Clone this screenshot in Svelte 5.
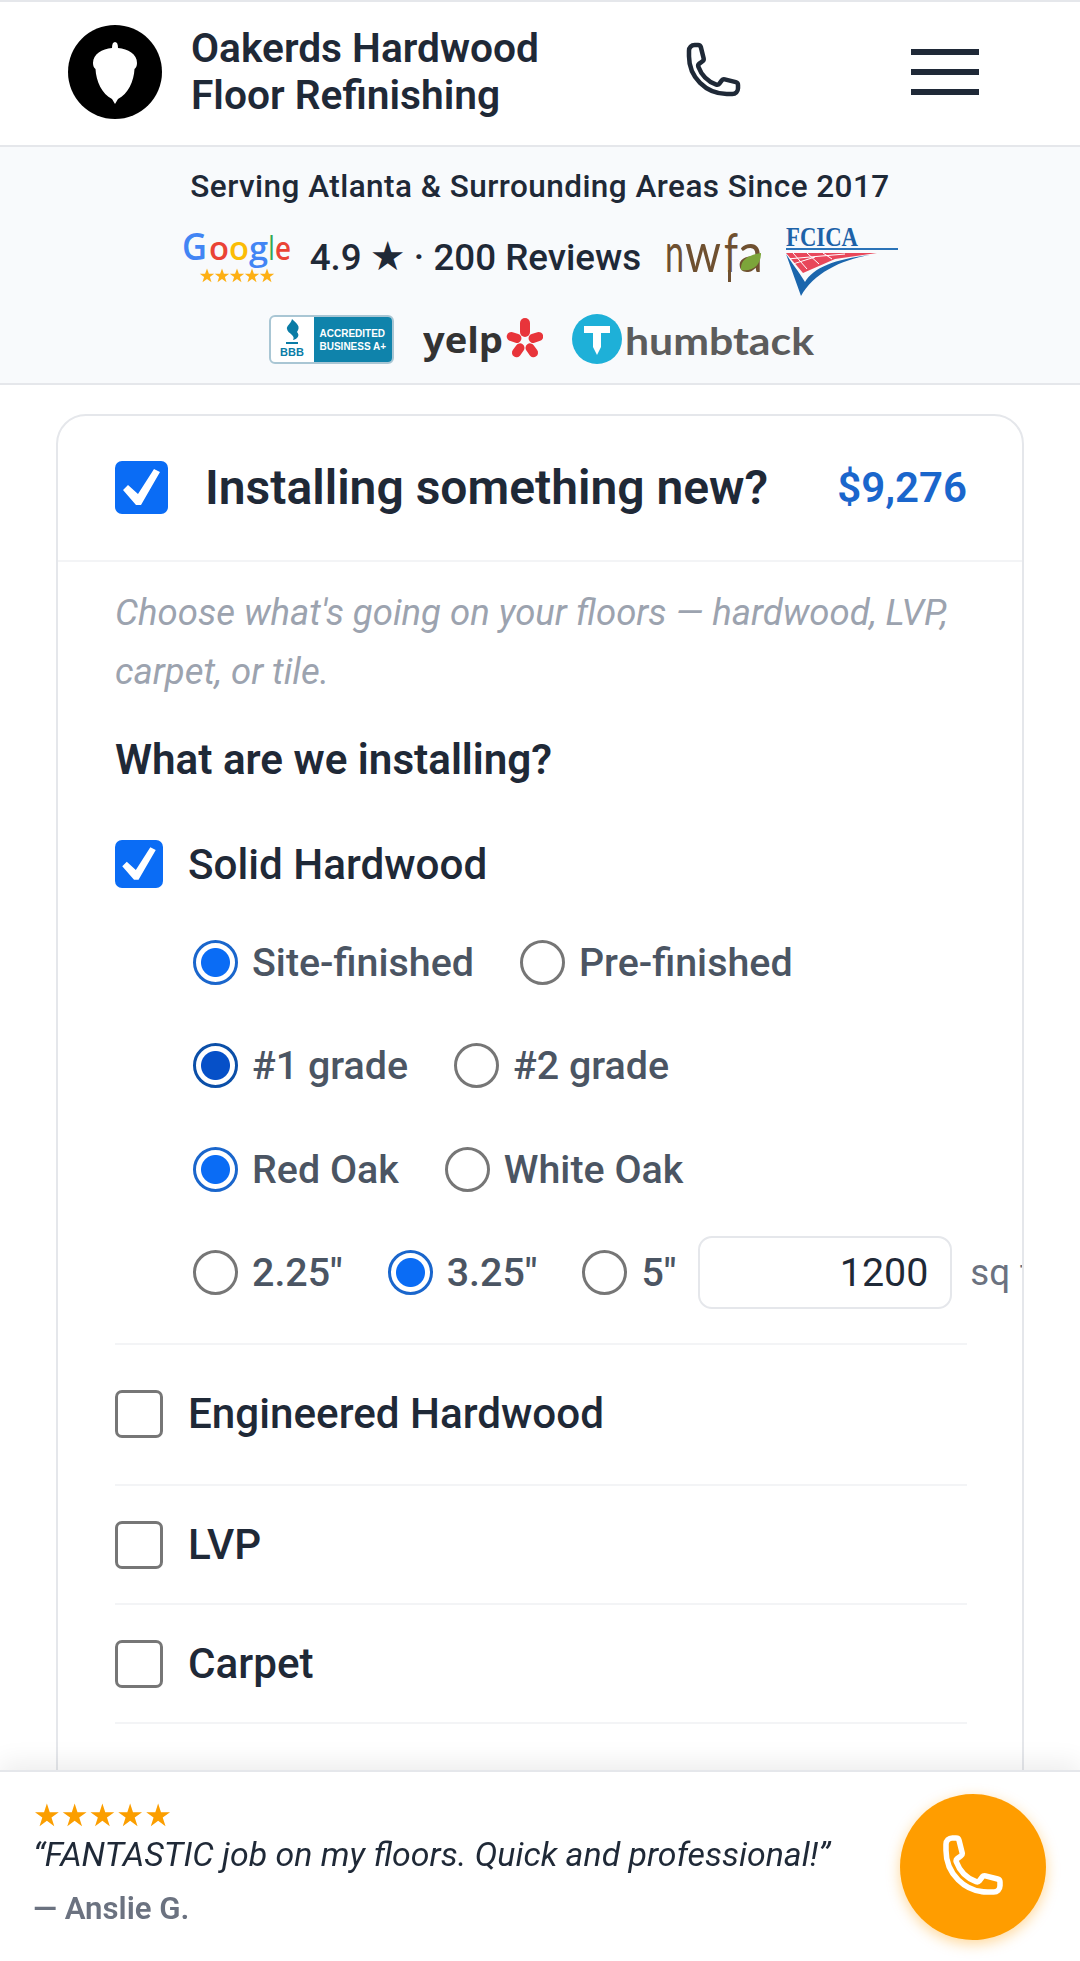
<script>
  const phone = "M2.25 6.75c0 8.284 6.716 15 15 15h2.25a2.25 2.25 0 002.25-2.25v-1.372c0-.516-.351-.966-.852-1.091l-4.423-1.106c-.44-.11-.902.055-1.173.417l-.97 1.293c-.282.376-.769.542-1.21.38a12.035 12.035 0 01-7.143-7.143c-.162-.441.004-.928.38-1.21l1.293-.97c.363-.271.527-.734.417-1.173L6.963 3.102a1.125 1.125 0 00-1.091-.852H4.5A2.25 2.25 0 002.25 4.5v2.25z";
  const check = "8,29 13,24 23,33 39,8 45,11 26,44 21,44";
  const star = "M0 -7.400 L1.900 -2.300 L7.200 -2.200 L2.900 1 L4.500 6.200 L0 3.100 L-4.500 6.200 L-2.900 1 L-7.200 -2.200 L-1.900 -2.300Z";
  const rows = [
    { cls: "", opts: [["Site-finished", true], ["Pre-finished", false]] },
    { cls: "focus", opts: [["#1 grade", true], ["#2 grade", false]] },
    { cls: "", opts: [["Red Oak", true], ["White Oak", false]] }
  ];
  const widths = [['2.25"', false], ['3.25"', true], ['5"', false]];
  const others = ["Engineered Hardwood", "LVP", "Carpet"];
  const google = [
    ["G", 0, 25, "#4285f4", 38], ["o", 27, 20, "#ea4335", 32], ["o", 47, 20, "#fbbc05", 32],
    ["g", 67, 19, "#4285f4", 32], ["l", 87, 5, "#34a853", 33], ["e", 93, 16, "#ea4335", 32]
  ];
  const nwfa = [["n", 0, 19], ["w", 20, 36], ["f", 59, 14], ["a", 73, 25]];
</script>

<div class="page">
  <header class="top">
    <div class="brand">
      <svg class="logo" viewBox="0 0 94 94" aria-hidden="true">
        <circle cx="47" cy="47" r="47" fill="#000" />
        <path fill="#fff" d="M44 23C44 19 45 17 47 17C49 17 50 19 50 23C60 24 69 29 69 38C69 41 68 43 66.500 44C66 56 60 69 50 74L47 79L44 74C34 69 28 56 27.500 44C26 43 25 41 25 38C25 29 34 24 44 23Z" />
      </svg>
      <div class="name">Oakerds Hardwood<br />Floor Refinishing</div>
    </div>
    <svg class="tel" viewBox="2.25 2.25 19.5 19.5" aria-label="Call"><path d={phone} /></svg>
    <div class="burger" aria-label="Menu"><span></span><span></span><span></span></div>
  </header>

  <section class="trust">
    <p class="since">Serving Atlanta &amp; Surrounding Areas Since 2017</p>
    <div class="logos first">
      <svg class="g" width="110" height="50" viewBox="0 0 110 50" aria-label="Google">
        {#each google as [ch, x, len, color, size]}
          <text x={x} y="27" font-family="Open Sans" font-weight="600" font-size={size} fill={color} textLength={len} lengthAdjust="spacingAndGlyphs">{ch}</text>
        {/each}
        {#each [0, 1, 2, 3, 4] as i}
          <path d={star} fill="#fdb015" transform={`translate(${25 + i * 15} 43)`} />
        {/each}
      </svg>
      <span class="rating">4.9 <span class="blackstar">★</span> · 200 Reviews</span>
      <svg class="nw" width="100" height="50" viewBox="0 0 100 50" aria-label="NWFA">
        {#each nwfa as [ch, x, len]}
          <text x={x} y="40" font-family="Lato" font-weight="400" font-size="54" fill="#6f5030" textLength={len} lengthAdjust="spacingAndGlyphs">{ch}</text>
        {/each}
        <rect x="63" y="38" width="3" height="12" fill="#6f5030" />
        <path d="M76 38 C75 28 83 23 96 21 C96 32 89 40 76 38Z" fill="#7ca53a" />
      </svg>
      <svg class="fc" width="113" height="70" viewBox="0 0 113 70" aria-label="FCICA">
        <text x="1" y="20" font-family="Liberation Serif" font-weight="700" font-size="28" fill="#1e62a8" textLength="72" lengthAdjust="spacingAndGlyphs">FCICA</text>
        <rect x="1" y="22" width="112" height="2" fill="#2b73b8" />
        <polygon points="1,27 92,27 50,33 18,47" fill="#e8475a" />
        <path d="M8 27 L22 43 M22 27 L34 38 M38 27 L47 33 M2 33 L60 28 M8 38 L30 31" stroke="#fff" stroke-width="1" fill="none" />
        <path d="M1 28 L16 70 C28 48 55 34 85 29 C50 33 28 42 20 56 C14 46 6 36 1 28Z" fill="#1b66ad" />
      </svg>
    </div>
    <div class="logos second">
      <div class="bbb">
        <div class="bbb-l">
          <svg width="26" height="30" viewBox="0 0 26 30" aria-hidden="true">
            <path d="M13 2 C18 7 22 9 18 15 C21 18 19 22 14 23 C17 18 9 17 8 12 C7 9 12 7 13 2Z" fill="#0a7ca6" />
            <rect x="7" y="25" width="12" height="2" fill="#0a7ca6" />
          </svg>
          <span>BBB</span>
        </div>
        <div class="bbb-r">ACCREDITED<br />BUSINESS A+</div>
      </div>
      <svg class="ye" width="120" height="46" viewBox="0 0 120 46" aria-label="Yelp">
        <text x="0" y="35" font-family="Open Sans" font-weight="700" font-size="36" fill="#333" textLength="80" lengthAdjust="spacingAndGlyphs">yelp</text>
        <g fill="#e8343a" transform="translate(102 23)">
          <rect x="-5" y="-23" width="10" height="19" rx="5" />
          <rect x="-4.500" y="-19" width="9" height="15" rx="4.500" transform="rotate(72)" />
          <rect x="-4.500" y="-19" width="9" height="15" rx="4.500" transform="rotate(144)" />
          <rect x="-4.500" y="-19" width="9" height="15" rx="4.500" transform="rotate(216)" />
          <rect x="-4.500" y="-19" width="9" height="15" rx="4.500" transform="rotate(288)" />
        </g>
      </svg>
      <svg width="243" height="52" viewBox="0 0 243 52" aria-label="Thumbtack">
        <circle cx="25" cy="26" r="25" fill="#1eb0d8" />
        <path d="M12 13H38V20H29V34L25 42L21 34V20H12Z" fill="#fff" />
        <text x="53" y="42" font-family="Lato" font-weight="700" font-size="38" fill="#5c5c5c" textLength="189" lengthAdjust="spacingAndGlyphs">humbtack</text>
      </svg>
    </div>
  </section>

  <main class="wrap">
    <section class="card">
      <div class="card-head">
        <span class="box big"><svg viewBox="0 0 53 53"><polygon points={check} /></svg></span>
        <h2>Installing something new?</h2>
        <span class="price">$9,276</span>
      </div>
      <div class="card-body">
        <p class="note">Choose what's going on your floors — hardwood, LVP, carpet, or tile.</p>
        <h3>What are we installing?</h3>

        <div class="item open">
          <div class="item-head">
            <span class="box on"><svg viewBox="0 0 53 53"><polygon points={check} /></svg></span>
            <span class="item-label">Solid Hardwood</span>
          </div>
          <div class="opts">
            {#each rows as row}
              <div class="opt-row">
                {#each row.opts as [label, on]}
                  <span class="opt"><i class="radio {on ? 'sel' : ''} {row.cls}"></i>{label}</span>
                {/each}
              </div>
            {/each}
            <div class="opt-row">
              {#each widths as [label, on]}
                <span class="opt tight"><i class="radio {on ? 'sel' : ''}"></i>{label}</span>
              {/each}
              <span class="qty">1200</span>
              <span class="unit">sq ft</span>
            </div>
          </div>
        </div>

        {#each others as name, i}
          <div class="item {i === 0 ? 'after-open' : ''}">
            <div class="item-head">
              <span class="box"></span>
              <span class="item-label">{name}</span>
            </div>
          </div>
        {/each}
      </div>
    </section>
  </main>

  <aside class="bar">
    <div class="review">
      <div class="stars">★★★★★</div>
      <p class="quote">“FANTASTIC job on my floors. Quick and professional!”</p>
      <p class="who">— Anslie G.</p>
    </div>
    <div class="call" aria-label="Call">
      <svg viewBox="2.25 2.25 19.5 19.5"><path d={phone} /></svg>
    </div>
  </aside>
</div>

<style>
  :global(body) { margin: 0; background: #fff; }
  .page {
    position: relative; height: 1961px; overflow: hidden;
    font-family: Roboto, "Liberation Sans", sans-serif; color: #1f2937;
  }
  .top {
    display: flex; align-items: center; height: 140px;
    padding: 0 101px 3px 68px;
    border-top: 2px solid #e5e7eb; border-bottom: 2px solid #e5e7eb;
  }
  .brand { display: flex; align-items: center; gap: 29px; flex: 1; }
  .logo { width: 94px; height: 94px; display: block; }
  .name { font-size: 40.700px; line-height: 47px; font-weight: 600; white-space: nowrap; }
  .tel { width: 49px; height: 49px; margin: 0 173px 6px 0; fill: none; stroke: #1f2937; stroke-width: 1.8; overflow: visible; }
  .burger { display: flex; flex-direction: column; gap: 14px; width: 68px; }
  .burger span { display: block; height: 6px; background: #1f2937; }

  .trust { background: #f8fafc; border-bottom: 2px solid #e5e7eb; height: 238px; box-sizing: border-box; padding-top: 22px; }
  .since { margin: 0; text-align: center; font-size: 31.500px; line-height: 36px; font-weight: 500; letter-spacing: .45px; }
  .logos { display: flex; justify-content: center; align-items: flex-start; }
  .first { gap: 20px; margin-top: 21px; height: 70px; }
  .second { gap: 29px; margin-top: 17px; height: 52px; }
  .g { display: block; margin-top: 7px; }
  .nw { display: block; margin-top: 6px; }
  .fc { display: block; }
  .ye { display: block; margin-top: 5px; }
  .rating { font-size: 36.750px; line-height: 42px; font-weight: 500; white-space: nowrap; margin: 9px 4px 0 -2px; }
  .blackstar { font-family: "DejaVu Sans", sans-serif; font-size: 40px; margin: 0 -1px; }
  .bbb {
    display: flex; width: 125px; height: 49px; box-sizing: border-box; background: #fff; margin: 2px 0 0 3px;
    border: 2px solid #a9c6d4; border-radius: 6px; overflow: hidden;
  }
  .bbb-l { width: 43px; display: flex; flex-direction: column; align-items: center; color: #0a7ca6; font: 700 11px/11px "Liberation Sans", sans-serif; }
  .bbb-l svg { display: block; }
  .bbb-r { flex: 1; background: #0f83ab; color: #fff; font: 700 10px/13px "Liberation Sans", sans-serif; padding: 10px 0 0 6px; white-space: nowrap; }

  .wrap { padding: 29px 56px 0; }
  .card { border: 2px solid #e5e7eb; border-radius: 30px; overflow: hidden; background: #fff; }
  .card-head {
    display: flex; align-items: center; height: 146px; box-sizing: border-box;
    padding: 0 55px 2px 57px; border-bottom: 2px solid #f3f4f6;
  }
  .card-head h2 { margin: 0 0 0 37px; flex: 1; font-size: 48px; font-weight: 600; white-space: nowrap; color: #1f2937; }
  .price { font-size: 42px; font-weight: 600; color: #1a66cc; }
  .card-body { padding: 21px 55px 120px 57px; }
  .note { margin: 0; font-size: 36.500px; line-height: 59px; font-style: italic; font-weight: 400; color: #9ca3af; }
  h3 { margin: 35px 0 0; font-size: 42.200px; line-height: 48px; font-weight: 600; color: #1f2937; }

  .box {
    display: block; flex: none; width: 48px; height: 48px; box-sizing: border-box;
    border: 3px solid #767676; border-radius: 7px; background: #fff;
  }
  .box.on, .box.big { background: #0a6cf5; border: 0; }
  .box.big { width: 53px; height: 53px; }
  .box svg { display: block; width: 100%; height: 100%; fill: #fff; }

  .item { border-bottom: 2px solid #f3f4f6; padding: 35px 0 34px; }
  .item.open { margin-top: 20px; padding: 36px 0 34px; }
  .item.after-open { padding: 45px 0 46px; }
  .item-head { display: flex; align-items: center; gap: 25px; height: 48px; }
  .item-label { font-size: 42.200px; font-weight: 500; white-space: nowrap; color: #1f2937; }

  .opts { display: flex; flex-direction: column; gap: 30.300px; margin-top: 38px; padding-left: 78px; }
  .opt-row { display: flex; align-items: center; height: 73px; white-space: nowrap; }
  .opt { display: flex; align-items: center; gap: 14px; margin-right: 46px; font-size: 39.400px; font-weight: 500; color: #4b5563; }
  .opt.tight { margin-right: 45px; }
  .opt.tight:nth-child(3) { margin-right: 22px; }
  .radio {
    display: block; flex: none; width: 45px; height: 45px; box-sizing: border-box;
    border: 3px solid #767676; border-radius: 50%; background: #fff;
  }
  .radio.sel { border-color: #1a66cc; background: radial-gradient(circle, #0a6cf5 0 14px, #fff 15px); }
  .radio.sel.focus { border-color: #0b4fa8; background: radial-gradient(circle, #0650c8 0 14px, #fff 15px); }
  .qty {
    flex: none; width: 254px; height: 73px; box-sizing: border-box; border: 2px solid #e5e7eb; border-radius: 14px;
    font-size: 39.400px; line-height: 69px; text-align: right; padding-right: 22px; color: #1f2937;
  }
  .unit { flex: none; margin-left: 18px; font-size: 36.750px; color: #6b7280; }

  .bar {
    position: fixed; left: 0; right: 0; bottom: 0; height: 191px; box-sizing: border-box;
    display: flex; justify-content: space-between; align-items: flex-start;
    padding: 26px 34px 0 33px; background: #fff;
    border-top: 2px solid #e5e7eb; box-shadow: 0 -8px 24px rgba(0, 0, 0, .07);
  }
  .stars { font: 31px/34px "DejaVu Sans", sans-serif; color: #fb9e00; }
  .quote { margin: 3px 0 0; font-size: 33.900px; line-height: 40px; font-style: italic; color: #1f2937; white-space: nowrap; }
  .who { margin: 14px 0 0; font-size: 31.200px; line-height: 40px; font-weight: 600; color: #6b7280; }
  .call {
    width: 146px; height: 146px; border-radius: 50%; background: #ff9d00; margin-top: -4px;
    display: flex; align-items: center; justify-content: center;
    box-shadow: 0 4px 14px rgba(255, 157, 0, .4);
  }
  .call svg { width: 54px; height: 54px; margin-bottom: 5px; fill: none; stroke: #fff; stroke-width: 2; overflow: visible; }
</style>
